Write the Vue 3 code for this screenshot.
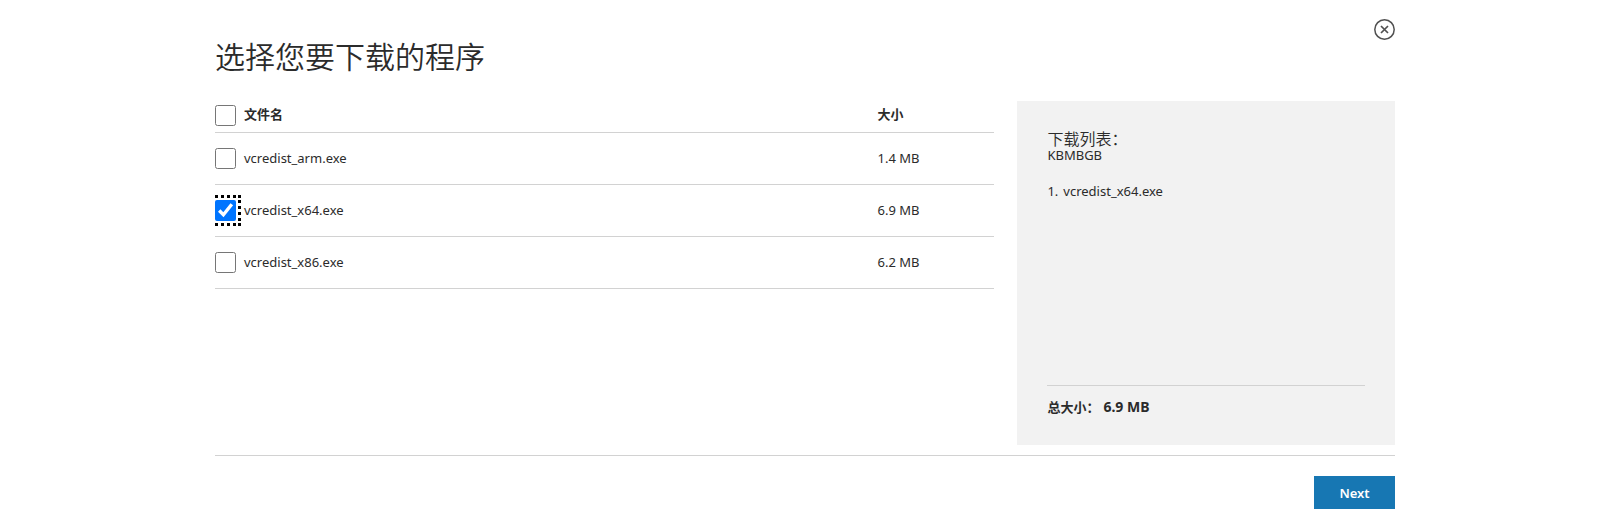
<script setup>
import { computed, onMounted, ref } from 'vue'

const files = ref([
  { name: 'vcredist_arm.exe', size: 1.4, picked: false },
  { name: 'vcredist_x64.exe', size: 6.9, picked: true },
  { name: 'vcredist_x86.exe', size: 6.2, picked: false },
])
const boxes = ref([])

const chosen = computed(() => files.value.filter((f) => f.picked))
const total = computed(() => chosen.value.reduce((sum, f) => sum + f.size, 0).toFixed(1))
const all = computed({
  get: () => files.value.every((f) => f.picked),
  set: (on) => files.value.forEach((f) => (f.picked = on)),
})

onMounted(() => boxes.value[1].focus())
</script>

<template>
  <main class="dialog">
    <header class="top">
      <h1>选择您要下载的程序</h1>
      <button class="close" type="button" aria-label="Close">
        <svg viewBox="0 0 21 21" width="21" height="21" fill="none" stroke="#505050">
          <circle cx="10.5" cy="10.5" r="9.7" stroke-width="1.5" />
          <path d="M7 7l7 7M14 7l-7 7" stroke-width="1.7" />
        </svg>
      </button>
    </header>

    <div class="columns">
      <div class="files">
        <table>
          <thead>
            <tr>
              <th>
                <span class="pick">
                  <input id="pick-all" v-model="all" type="checkbox" />
                  <label for="pick-all">文件名</label>
                </span>
              </th>
              <th class="size"><span>大小</span></th>
            </tr>
          </thead>
          <tbody>
            <tr v-for="(file, i) in files" :key="file.name">
              <td>
                <span class="pick">
                  <input :id="'file-' + i" ref="boxes" v-model="file.picked" type="checkbox" />
                  <label :for="'file-' + i">{{ file.name }}</label>
                </span>
              </td>
              <td class="size"><span>{{ file.size }} MB</span></td>
            </tr>
          </tbody>
        </table>
      </div>

      <aside class="summary">
        <h2>下载列表：</h2>
        <p class="units">KBMBGB</p>
        <ol>
          <li v-for="(file, i) in chosen" :key="file.name">
            <span>{{ i + 1 }}.</span><span>{{ file.name }}</span>
          </li>
        </ol>
        <p class="total"><span>总大小：</span><span class="sum">{{ total }} MB</span></p>
      </aside>
    </div>

    <footer>
      <button class="next" type="button">Next</button>
    </footer>
  </main>
</template>

<style>
body {
  background: #fff;
}
</style>

<style scoped>
.dialog {
  max-width: 1180px;
  margin: 0 auto;
  padding: 19px 22px 16px 28px;
  color: #2b2b2b;
  font-family: "Noto Sans", "Noto Sans CJK SC", sans-serif;
  font-size: 13px;
  line-height: 16px;
}
.top {
  display: flex;
  justify-content: space-between;
  align-items: flex-start;
  height: 82px;
}
h1 {
  margin: 16px 0 0;
  font-family: "Noto Sans CJK SC", sans-serif;
  font-size: 30px;
  font-weight: 350;
  line-height: 40px;
}
.close {
  display: flex;
  padding: 0;
  border: 0;
  background: none;
}
.columns {
  display: grid;
  grid-template-columns: minmax(0, 1fr) 32%;
  gap: 23px;
  padding-bottom: 10px;
  border-bottom: 1px solid #d2d2d2;
}
.files {
  overflow: hidden;
}
table {
  width: 100%;
  border-collapse: separate;
  border-spacing: 0;
}
th,
td {
  padding: 0;
  border-bottom: 1px solid #d2d2d2;
  text-align: left;
}
th {
  height: 29px;
  padding-bottom: 2px;
}
td {
  height: 51px;
}
.size {
  width: 15%;
}
.pick {
  display: flex;
  align-items: center;
  gap: 8px;
}
label,
.size span {
  display: block;
  padding-bottom: 2px;
}
th label,
th.size span {
  padding-bottom: 4px;
}
input {
  flex: none;
  width: 21px;
  height: 21px;
  margin: 0;
}
input:focus {
  outline: 3px dotted #000;
  outline-offset: 2px;
}
.summary {
  display: flex;
  flex-direction: column;
  box-sizing: border-box;
  min-height: 344px;
  padding: 30px;
  background: #f2f2f2;
}
h2 {
  margin: 0;
  font-size: 16px;
  font-weight: 350;
  line-height: 16px;
}
.units,
.total,
ol {
  margin: 0;
  padding: 0;
}
ol {
  flex: 1;
  margin-top: 20px;
  list-style: none;
}
li {
  display: flex;
  gap: 5px;
}
.total {
  display: flex;
  gap: 4px;
  padding-top: 13px;
  border-top: 1px solid #d2d2d2;
  font-weight: 700;
}
.sum {
  font-size: 14px;
}
footer {
  display: flex;
  justify-content: flex-end;
  padding-top: 20px;
}
.next {
  width: 81px;
  height: 33px;
  padding: 0;
  border: 0;
  background: #1777b3;
  color: #fff;
  font: 600 13px/16px "Noto Sans", sans-serif;
}
</style>
